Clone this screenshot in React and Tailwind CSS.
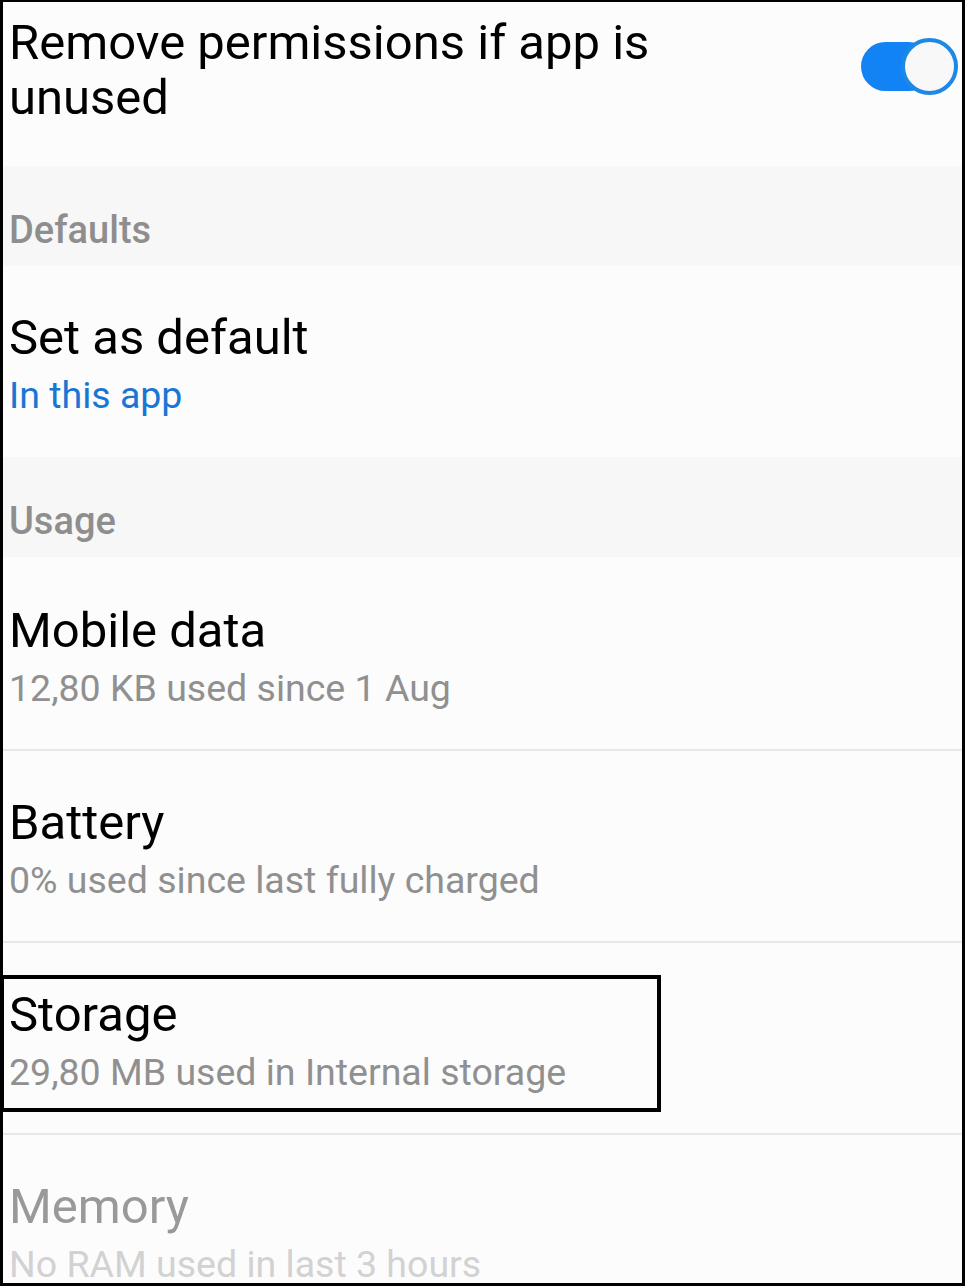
import React from 'react';

const font = { fontFamily: 'Roboto, "Noto Sans", sans-serif' };

// Toggle drawn as svg: track partly hidden under the knob
const Toggle = () => (
  <svg width="98" height="60" viewBox="0 0 98 60" className="shrink-0">
    <rect x="0" y="5" width="72" height="49" rx="24.5" fill="#1283f5" />
    <circle cx="68.5" cy="29.5" r="26.5" fill="#f8f8f8" stroke="#1e88e5" strokeWidth="4" />
  </svg>
);

const SectionHeader = ({ label }) => (
  <div className="h-[100px] bg-[#f7f7f7] pl-[6px] pt-[46px]">
    <div className="text-[38px] leading-[37px] font-medium text-[#8e8e8e]">{label}</div>
  </div>
);

const Row = ({
  title,
  subtitle,
  titleColor = 'text-black',
  subColor = 'text-[#909090]',
  divider = true,
  height = 'h-[192px]',
  pad = 'pt-[44px]',
  children,
}) => (
  <div className={`relative ${height} pl-[6px] ${pad} ${divider ? 'border-b-2 border-[#e8e8e8]' : ''}`}>
    <div className={`text-[49px] leading-[56px] ${titleColor}`}>{title}</div>
    <div className={`mt-[7px] text-[37.5px] leading-[44px] ${subColor}`}>{subtitle}</div>
    {children}
  </div>
);

export default function App() {
  return (
    <div
      className="relative w-[965px] h-[1286px] overflow-hidden bg-[#fcfcfc] border-t-2 border-l-[3px] border-r-[3px] border-b-[3px] border-black"
      style={font}
    >
      {/* Auto revoke permissions */}
      <div className="h-[164px] flex items-start justify-between pl-[6px] pr-[3px]">
        <div className="max-w-[700px] pt-[13px] text-[49px] leading-[55px] text-black">
          Remove permissions if app is unused
        </div>
        <div className="mt-[35px]">
          <Toggle />
        </div>
      </div>

      <SectionHeader label="Defaults" />

      <Row
        title="Set as default"
        subtitle="In this app"
        subColor="text-[#1976d2]"
        divider={false}
        height="h-[191px]"
      />

      <SectionHeader label="Usage" />

      <Row title="Mobile data" subtitle="12,80 KB used since 1 Aug" height="h-[194px]" pad="pt-[46px]" />
      <Row title="Battery" subtitle="0% used since last fully charged" />
      <Row title="Storage" subtitle="29,80 MB used in Internal storage">
        {/* highlight frame */}
        <div className="absolute left-[-3px] top-[32px] w-[661px] h-[137px] border-4 border-black pointer-events-none" />
      </Row>
      <Row
        title="Memory"
        subtitle="No RAM used in last 3 hours"
        titleColor="text-[#999999]"
        subColor="text-[#d2d2d2]"
        divider={false}
      />
    </div>
  );
}
